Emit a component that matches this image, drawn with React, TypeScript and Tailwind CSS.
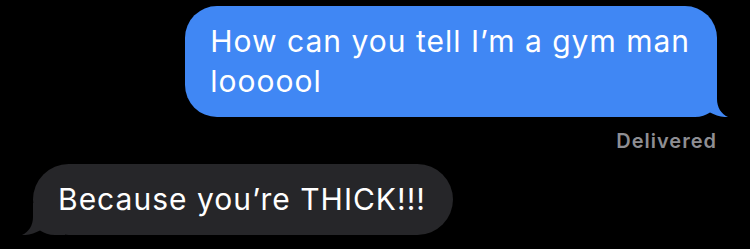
const SentTail = () => (
    <svg
        className="absolute bottom-0 right-[-12px] h-[32px] w-[44px]"
        viewBox="0 0 44 32"
        fill="#4087f4"
    >
        <path d="M0,32 L0,0 L32,0 L32,14 C32,22 36,29 43,32 C37,32.5 30,30 25,27.5 C21,30 16,32 10,32 Z" />
    </svg>
)

const ReceivedTail = () => (
    <svg
        className="absolute bottom-0 left-[-12px] h-[32px] w-[44px]"
        viewBox="0 0 44 32"
        fill="#262629"
    >
        <path d="M44,32 L44,0 L12,0 L12,14 C12,22 8,29 1,32 C7,32.5 14,30 19,27.5 C23,30 28,32 34,32 Z" />
    </svg>
)

export default function App() {
    return (
        <div className="h-[249px] w-[750px] overflow-hidden bg-black font-['Inter',sans-serif]">
            <div className="flex flex-col items-end pr-[33px] pt-[6px]">
                <div className="relative rounded-[32px] bg-[#4087f4] pb-[16px] pl-[25px] pr-[27px] pt-[15px] text-[30px] leading-[40px] tracking-[1px] text-white">
                    <span className="relative z-10 whitespace-nowrap">
                        How can you tell I’m a gym man
                        <br />
                        loooool
                    </span>
                    <SentTail />
                </div>
                <div className="mt-[12px] text-[20px] font-semibold leading-[24px] tracking-[1px] text-[#8e8e93]">Delivered</div>
            </div>

            <div className="mt-[11px] flex pl-[33px]">
                <div className="relative rounded-[36px] bg-[#262629] pb-[16px] pl-[25px] pr-[27px] pt-[15px] text-[30px] leading-[40px] tracking-[1px] text-white">
                    <span className="relative z-10 whitespace-nowrap">Because you’re THICK!!!</span>
                    <ReceivedTail />
                </div>
            </div>
        </div>
    )
}
